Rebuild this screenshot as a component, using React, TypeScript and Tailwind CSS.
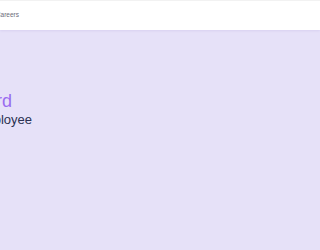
import React from "react";

export default function App() {
  return (
    <div className="w-full h-screen overflow-hidden bg-[#e6e1f8] flex flex-col" style={{ fontFamily: "'Liberation Sans', Arial, sans-serif" }}>
      <header className="h-[30px] shrink-0 bg-white border-t border-[#f2f2f2] shadow-[0_1px_2px_rgba(120,100,200,0.12)] flex items-center">
        <div className="flex justify-end w-[19px] mt-[-1px]">
          <span className="whitespace-nowrap text-[6.5px] text-[#6b6b78]">Careers</span>
        </div>
      </header>
      <main className="flex flex-col pt-[60px]">
        <div className="flex justify-end w-[12px]">
          <span className="whitespace-nowrap text-[18px] leading-[22px] text-[#9a6cf0]">Onboard</span>
        </div>
        <div className="flex justify-end w-[32px]">
          <span className="whitespace-nowrap text-[13px] leading-[16px] text-[#2b3252]">Employee</span>
        </div>
      </main>
    </div>
  );
}
